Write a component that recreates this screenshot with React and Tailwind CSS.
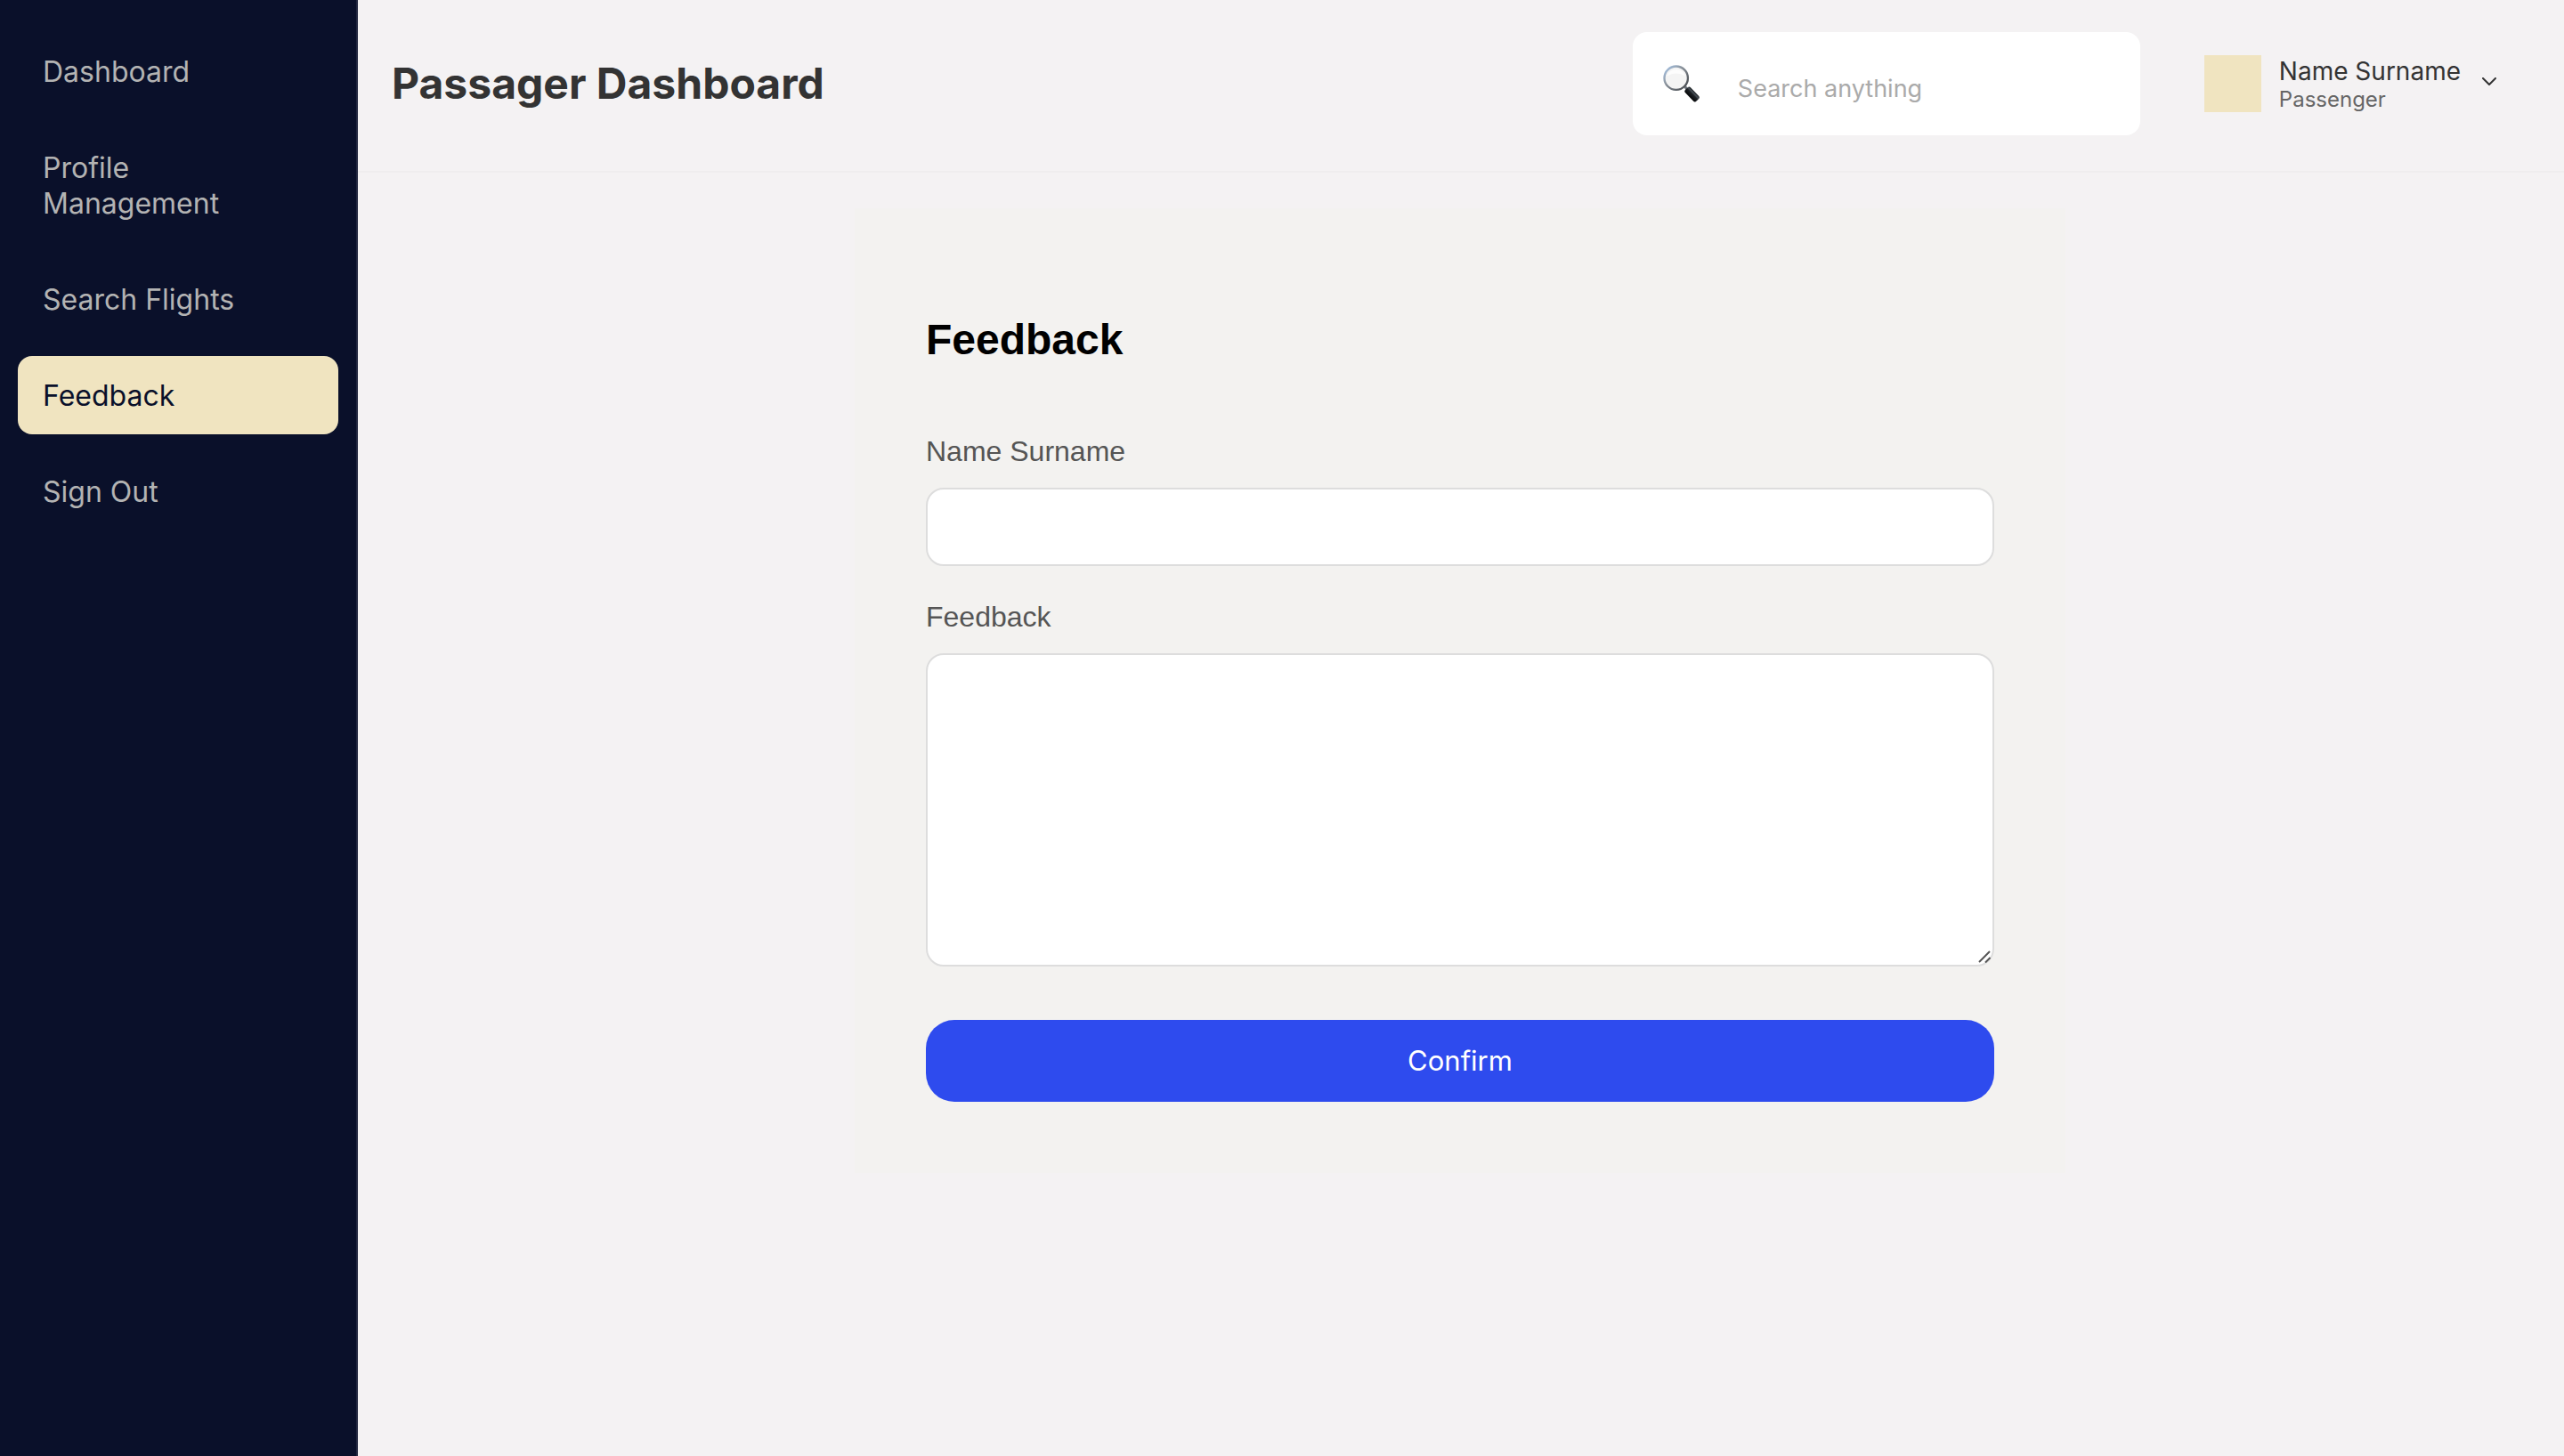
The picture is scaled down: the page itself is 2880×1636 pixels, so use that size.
import React from "react";

const navItems = [
  { label: "Dashboard" },
  { label: "Profile Management" },
  { label: "Search Flights" },
  { label: "Feedback", active: true },
  { label: "Sign Out" },
];

function Sidebar() {
  return (
    <aside className="w-[402px] shrink-0 border-r-2 border-[#232840] bg-[#0a102a] px-5 py-9">
      <nav className="flex flex-col gap-5">
        {navItems.map((item) => (
          <a
            key={item.label}
            href="#"
            aria-current={item.active ? "page" : undefined}
            className={
              item.active
                ? "rounded-2xl bg-[#f0e4c0] pt-[25px] pb-[23px] pl-7 pr-24 text-[32px] leading-10 text-[#0a102a]"
                : "rounded-2xl pt-[25px] pb-[23px] pl-7 pr-24 text-[32px] leading-10 text-[#b3b3b3]"
            }
          >
            {item.label}
          </a>
        ))}
      </nav>
    </aside>
  );
}

function MagnifierIcon() {
  return (
    <svg viewBox="0 0 40 40" className="size-[42px] shrink-0" aria-hidden="true">
      <defs>
        <linearGradient id="rim" x1="0" y1="0" x2="1" y2="1">
          <stop offset="0" stopColor="#a9c8ec" />
          <stop offset="0.4" stopColor="#8b939c" />
          <stop offset="1" stopColor="#3e4145" />
        </linearGradient>
        <linearGradient id="handle" x1="0" y1="1" x2="0" y2="0">
          <stop offset="0" stopColor="#050608" />
          <stop offset="0.55" stopColor="#1d2125" />
          <stop offset="0.75" stopColor="#4a525a" />
          <stop offset="1" stopColor="#15181b" />
        </linearGradient>
      </defs>
      <path d="M23.5 23.5 L27 27" stroke="#6d737a" strokeWidth="3" />
      <circle cx="14" cy="14" r="12.6" fill="#f4f4f4" stroke="url(#rim)" strokeWidth="2.2" />
      <path d="M4 12 A10.5 10.5 0 0 1 24 12 Q14 6 4 12" fill="#fff" opacity="0.8" />
      <rect x="22.5" y="27.4" width="17" height="8" rx="2.4" fill="url(#handle)" transform="rotate(46 31 31.4)" />
    </svg>
  );
}

function Header() {
  return (
    <header className="flex items-center border-b-2 border-[#efedee] pt-9 pb-10 pl-[38px] pr-[76px]">
      <h1 className="text-5xl font-bold text-[#333]">Passager Dashboard</h1>
      <div className="ml-auto flex h-[116px] w-[570px] items-center rounded-2xl bg-white px-[34px]">
        <MagnifierIcon />
        <input
          type="search"
          aria-label="Search anything"
          placeholder="Search anything"
          className="ml-[42px] mt-3 min-w-0 flex-1 bg-transparent text-[27px] leading-9 outline-none placeholder:text-[#aaa]"
        />
      </div>
      <button type="button" className="ml-[72px] flex items-center text-left">
        <span className="size-16 bg-[#f0e4c0]" />
        <span className="ml-5 flex flex-col">
          <span className="text-[28px] leading-9 text-[#333]">Name Surname</span>
          <span className="text-2xl leading-7 text-[#666]">Passenger</span>
        </span>
        <svg viewBox="0 0 16 10" className="mb-1 ml-6 h-[10px] w-4" fill="none" aria-hidden="true">
          <path d="M1 1 L8 8 L15 1" stroke="#333" strokeWidth="2" strokeLinecap="round" strokeLinejoin="round" />
        </svg>
      </button>
    </header>
  );
}

function FeedbackForm() {
  return (
    <form className="w-full max-w-[1360px] bg-[#f3f2f0] p-20 font-['Liberation_Sans',Arial,sans-serif]">
      <h2 className="mt-10 text-5xl leading-[56px] font-bold text-black">Feedback</h2>
      <div className="mt-20 flex flex-col gap-6">
        <label htmlFor="fullname" className="text-[32px] leading-[34px] text-[#555]">Name Surname</label>
        <input
          id="fullname"
          type="text"
          className="h-[88px] rounded-[20px] border-2 border-[#ddd] bg-white px-5 text-[28px] outline-none"
        />
      </div>
      <div className="mt-10 flex flex-col gap-6">
        <label htmlFor="message" className="text-[32px] leading-[34px] text-[#555]">Feedback</label>
        <div className="relative flex">
          <textarea
            id="message"
            className="h-[352px] flex-1 resize-none rounded-[20px] border-2 border-[#ddd] bg-white p-5 text-[28px] outline-none"
          />
          <svg viewBox="0 0 16 16" className="pointer-events-none absolute right-1 bottom-1 size-4" fill="none" aria-hidden="true">
            <path d="M3 15 L15 3 M10 15.5 L15.5 10" stroke="#555" strokeWidth="2" />
          </svg>
        </div>
      </div>
      <button
        type="submit"
        className="mt-[60px] h-[92px] w-full rounded-[32px] bg-[#2e4bee] font-['Inter',sans-serif] text-[31px] text-white"
      >
        Confirm
      </button>
    </form>
  );
}

export default function App() {
  return (
    <div className="flex min-h-screen bg-[#f4f2f3] font-['Inter',sans-serif]">
      <Sidebar />
      <div className="flex min-w-0 flex-1 flex-col">
        <Header />
        <main className="flex justify-center py-10 pr-0.5">
          <FeedbackForm />
        </main>
      </div>
    </div>
  );
}
